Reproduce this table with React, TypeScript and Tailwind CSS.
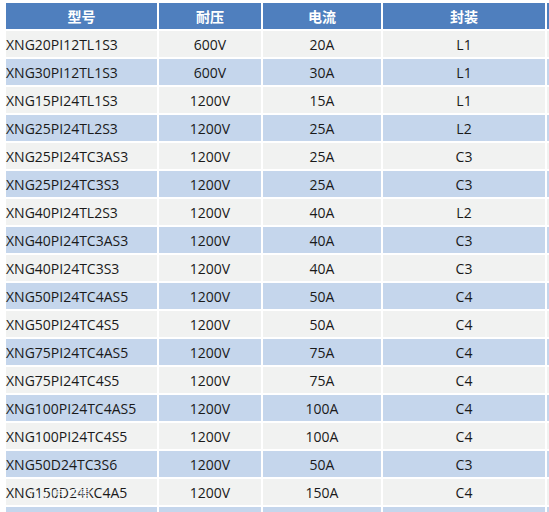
import React from "react";

const rows: [string, string, string, string][] = [
  ["XNG20PI12TL1S3", "600V", "20A", "L1"],
  ["XNG30PI12TL1S3", "600V", "30A", "L1"],
  ["XNG15PI24TL1S3", "1200V", "15A", "L1"],
  ["XNG25PI24TL2S3", "1200V", "25A", "L2"],
  ["XNG25PI24TC3AS3", "1200V", "25A", "C3"],
  ["XNG25PI24TC3S3", "1200V", "25A", "C3"],
  ["XNG40PI24TL2S3", "1200V", "40A", "L2"],
  ["XNG40PI24TC3AS3", "1200V", "40A", "C3"],
  ["XNG40PI24TC3S3", "1200V", "40A", "C3"],
  ["XNG50PI24TC4AS5", "1200V", "50A", "C4"],
  ["XNG50PI24TC4S5", "1200V", "50A", "C4"],
  ["XNG75PI24TC4AS5", "1200V", "75A", "C4"],
  ["XNG75PI24TC4S5", "1200V", "75A", "C4"],
  ["XNG100PI24TC4AS5", "1200V", "100A", "C4"],
  ["XNG100PI24TC4S5", "1200V", "100A", "C4"],
  ["XNG50D24TC3S6", "1200V", "50A", "C3"],
  ["XNG150D24KC4A5", "1200V", "150A", "C4"],
  ["", "", "", ""],
];

export default function App() {
  return (
    <div
      className="relative w-[549px] h-[512px] overflow-hidden bg-white"
      style={{ fontFamily: '"Open Sans", "Noto Sans CJK SC", sans-serif' }}
    >
      <div className="ml-[6px] mt-[3px] grid grid-cols-[151px_102px_118px_162px_120px] auto-rows-[26px] gap-[2px] text-[14px] text-[#1a1a1a]">
        {["型号", "耐压", "电流", "封装", ""].map((h, i) => (
          <div
            key={"h" + i}
            className="bg-[#4f7fbe] text-white font-bold flex items-center justify-center"
          >
            {h}
          </div>
        ))}
        {rows.map((r, ri) => {
          const bg = ri % 2 === 0 ? "bg-[#f1f2f1]" : "bg-[#c5d6ec]";
          return (
            <React.Fragment key={ri}>
              <div className={`${bg} flex items-center`}>{r[0]}</div>
              <div className={`${bg} flex items-center justify-center`}>{r[1]}</div>
              <div className={`${bg} flex items-center justify-center`}>{r[2]}</div>
              <div className={`${bg} flex items-center justify-center`}>{r[3]}</div>
              <div className={bg}></div>
            </React.Fragment>
          );
        })}
      </div>
      <div className="absolute left-[30px] top-[486px] text-[12px] text-white/80 flex items-center gap-[4px]">
        <span className="inline-block w-[9px] h-[9px] rounded-full border border-white/80"></span>
        <span>几豆巧原</span>
      </div>
    </div>
  );
}
